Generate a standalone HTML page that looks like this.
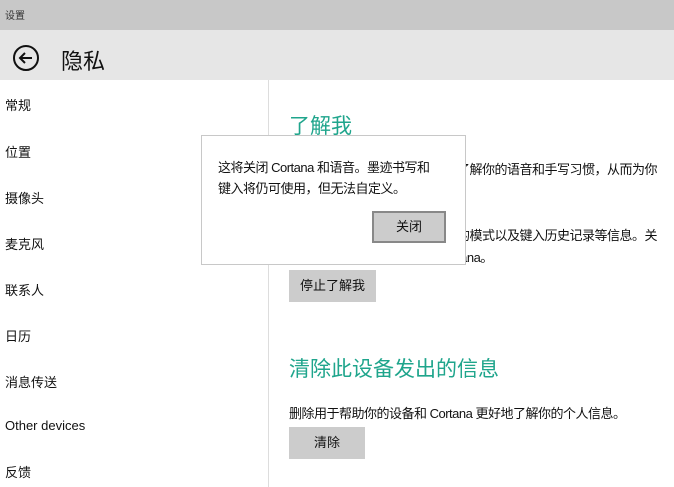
<!DOCTYPE html>
<html><head><meta charset="utf-8"><style>
*{margin:0;padding:0;box-sizing:border-box}
body{width:674px;height:487px;position:relative;overflow:hidden;background:#fff;font-family:"Liberation Sans","Noto Sans CJK SC",sans-serif;color:#111}
.a{position:absolute;white-space:nowrap}
.s{font-size:13px;left:5px}
.t{font-size:13px;letter-spacing:-0.5px}
.h{color:#1fa58c;font-size:21px}
.btn{position:absolute;background:#cccccc;font-size:13px;text-align:center}
</style></head><body>
<div class="a" style="left:0;top:0;width:674px;height:30px;background:#c8c8c8"></div>
<div class="a" style="left:5px;top:7px;font-size:10px;color:#333">设置</div>
<div class="a" style="left:0;top:30px;width:674px;height:50px;background:#e6e6e6"></div>
<svg class="a" style="left:12px;top:44px" width="28" height="28" viewBox="0 0 28 28"><circle cx="14" cy="14" r="12" fill="none" stroke="#111" stroke-width="2"/><path d="M20 14H8M13 9l-5 5 5 5" fill="none" stroke="#111" stroke-width="2"/></svg>
<div class="a" style="left:61px;top:44px;font-size:22px">隐私</div>
<div class="a" style="left:268px;top:80px;width:1px;height:407px;background:#ddd"></div>
<div class="a s" style="top:95px">常规</div>
<div class="a s" style="top:142px">位置</div>
<div class="a s" style="top:188px">摄像头</div>
<div class="a s" style="top:234px">麦克风</div>
<div class="a s" style="top:280px">联系人</div>
<div class="a s" style="top:326px">日历</div>
<div class="a s" style="top:372px">消息传送</div>
<div class="a s" style="top:418px">Other devices</div>
<div class="a s" style="top:462px">反馈</div>
<div class="a h" style="left:289px;top:110px">了解我</div>
<div class="a t" style="left:457px;top:159px">了解你的语音和手写习惯，从而为你</div>
<div class="a t" style="left:457px;top:225px">的模式以及键入历史记录等信息。关</div>
<div class="a t" style="left:457px;top:247px">tana。</div>
<div class="btn" style="left:289px;top:270px;width:87px;height:32px;line-height:32px">停止了解我</div>
<div class="a h" style="left:289px;top:353px">清除此设备发出的信息</div>
<div class="a t" style="left:289px;top:403px">删除用于帮助你的设备和 Cortana 更好地了解你的个人信息。</div>
<div class="btn" style="left:289px;top:427px;width:76px;height:32px;line-height:32px">清除</div>
<div class="a" style="left:201px;top:135px;width:265px;height:130px;background:#fff;border:1px solid #c8c8c8"></div>
<div class="a t" style="left:218px;top:157px;line-height:21px">这将关闭 Cortana 和语音。墨迹书写和<br>键入将仍可使用，但无法自定义。</div>
<div class="btn" style="left:372px;top:211px;width:74px;height:32px;line-height:28px;border:2px solid #888">关闭</div>
</body></html>
